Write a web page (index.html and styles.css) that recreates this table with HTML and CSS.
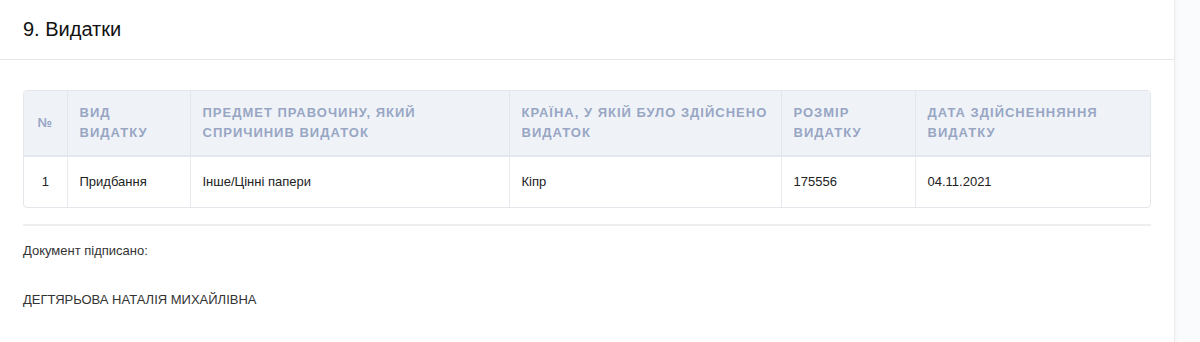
FILE: index.html
```html
<!DOCTYPE html>
<html lang="uk">
<head>
<meta charset="utf-8">
<link rel="stylesheet" href="styles.css">
</head>
<body>
<div class="page">
  <div class="card">
    <div class="card-head">
      <h2 class="title">9. Видатки</h2>
    </div>
    <div class="card-body">
      <div class="table-wrap">
        <table class="tbl">
          <colgroup>
            <col style="width:43px">
            <col style="width:123px">
            <col style="width:319px">
            <col style="width:272px">
            <col style="width:134px">
            <col style="width:235px">
          </colgroup>
          <thead>
            <tr>
              <th class="num">№</th>
              <th>Вид видатку</th>
              <th>Предмет правочину, який спричинив видаток</th>
              <th>Країна, у якій було здійснено видаток</th>
              <th>Розмір видатку</th>
              <th>Дата здійсненняння видатку</th>
            </tr>
          </thead>
          <tbody>
            <tr>
              <td class="num">1</td>
              <td>Придбання</td>
              <td>Інше/Цінні папери</td>
              <td>Кіпр</td>
              <td>175556</td>
              <td>04.11.2021</td>
            </tr>
          </tbody>
        </table>
      </div>
      <div class="divider"></div>
      <p class="signed">Документ підписано:</p>
      <p class="signer">ДЕГТЯРЬОВА НАТАЛІЯ МИХАЙЛІВНА</p>
    </div>
  </div>
</div>
</body>
</html>
```

FILE: styles.css
```css
html, body {
  margin: 0;
  padding: 0;
}
body {
  background: #fafbfc;
  font-family: "Liberation Sans", Arial, sans-serif;
  color: #222;
  height: 342px;
  overflow: hidden;
}
.page {
  display: flex;
}
.card {
  width: 1174px;
  min-height: 342px;
  background: #fff;
  border-right: 1px solid #ebebeb;
  box-shadow: 1px 0 3px rgba(0,0,0,0.03);
}
.card-head {
  height: 59px;
  border-bottom: 1px solid #e6e6e6;
  padding: 0 23px;
  display: flex;
  align-items: center;
}
.title {
  margin: 0;
  font-size: 20px;
  font-weight: normal;
  color: #111;
  padding-bottom: 1px;
}
.card-body {
  padding: 30px 23px 0;
}
.table-wrap {
  border: 1px solid #e3e6ea;
  border-radius: 4px;
  overflow: hidden;
}
.tbl {
  width: 100%;
  border-collapse: collapse;
  table-layout: fixed;
  font-size: 13px;
}
.tbl th {
  background: #eff3f8;
  color: #98a6c4;
  font-weight: bold;
  text-transform: uppercase;
  letter-spacing: 1px;
  text-align: left;
  line-height: 20px;
  padding: 12px 12px 12px 12px;
  border-left: 1px solid #e2e7ee;
  border-bottom: 2px solid #e3e8ee;
  vertical-align: middle;
}
.tbl td {
  color: #222;
  line-height: 20px;
  padding: 15px 12px 15px 12px;
  border-left: 1px solid #e6e9ed;
}
.tbl th:first-child, .tbl td:first-child {
  border-left: none;
}
.tbl .num {
  text-align: center;
  padding-left: 4px;
  padding-right: 4px;
}
.divider {
  height: 2px;
  background: #eeeeee;
  margin-top: 16px;
}
.signed {
  margin: 17px 0 0;
  font-size: 13px;
  line-height: 16px;
  color: #333;
}
.signer {
  margin: 33px 0 0;
  font-size: 13px;
  line-height: 16px;
  color: #333;
}
```
